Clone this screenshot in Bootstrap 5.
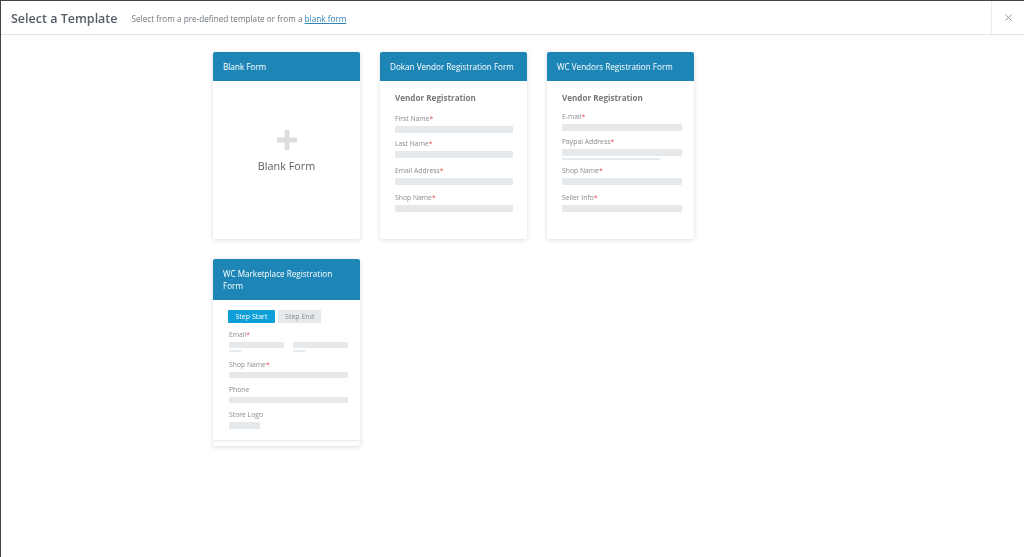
<!DOCTYPE html>
<html lang="en">
<head>
    <meta charset="UTF-8">
    <meta name="viewport" content="width=device-width, initial-scale=1.0">
    <title>Select a Template</title>
    <link href="https://cdn.jsdelivr.net/npm/bootstrap@5.3.0/dist/css/bootstrap.min.css" rel="stylesheet">
    <style>
        body {
            font-family: "Open Sans", "Liberation Sans", sans-serif;
            background: #fff;
            height: 557px;
            overflow: hidden;
            border-top: 1px solid #444;
            border-left: 1px solid #444;
        }
        /* the reference is a slightly soft, scaled-down capture */
        .top-bar, .template-list { filter: blur(.3px); }
        .top-bar {
            height: 34px;
            border-bottom: 1px solid #e2e4e7;
        }
        .top-bar h1 {
            font-size: 12.5px;
            font-weight: 600;
            color: #555d66;
            margin: 2px 14px 0 10px;
        }
        .top-bar p {
            font-size: 8.2px;
            color: #6f777d;
            margin: 4px 0 0;
        }
        .top-bar a { color: #2f86b4; }
        .close-box {
            width: 33px;
            border-left: 1px solid #e8eaec;
            color: #8d99a3;
        }
        .template-list {
            display: grid;
            grid-template-columns: repeat(3, 147px);
            grid-auto-rows: 187px;
            gap: 20px;
            padding: 17px 0 0 212px;
        }
        .template-card {
            border: 0;
            border-radius: 2px;
            box-shadow: 0 1px 5px rgba(0, 0, 0, .14);
            overflow: hidden;
        }
        .template-head {
            background: #1e86b6;
            color: #fff;
            font-size: 8.15px;
            line-height: 12px;
            padding: 9px 9px 8px 10px;
            font-weight: 400;
        }
        .blank-body {
            height: 158px;
            padding-top: 49px;
            color: #5e5e5e;
            font-size: 10.8px;
            line-height: 16px;
        }
        .blank-body svg { display: block; margin: 0 auto 8px; }
        .preview { padding: 11px 14px 0 15px; }
        .preview.wide { padding-right: 12px; }
        .preview h6 {
            font-size: 8.1px;
            line-height: 12px;
            font-weight: 700;
            color: #7a7a7a;
            margin: 0 0 9px;
        }
        .preview h6.tight { margin-bottom: 7px; }
        .lbl {
            font-size: 6.8px;
            line-height: 10px;
            padding-top: 1px;
            color: #8b8b8b;
        }
        .lbl span { color: #e4505a; }
        .bar {
            height: 7px;
            background: #e5e9eb;
            border-radius: 1px;
            margin-top: 2px;
        }
        .row-s { margin-top: 5px; }
        .row-6 { margin-top: 6px; }
        .row-m { margin-top: 7px; }
        .thin {
            height: 2px;
            width: 98px;
            background: #e5e9eb;
            margin-top: 2px;
        }
        .tiny {
            height: 2px;
            width: 12px;
            background: #e5e9eb;
            margin-top: 2px;
        }
        .market-inner {
            height: 140px;
            padding: 10px 12px 0 16px;
            box-shadow: 0 1px 2px rgba(0, 0, 0, .1);
        }
        .market-inner .bar { height: 6px; }
        .market-inner .bar.logo { height: 7px; width: 31px; }
        .steps { gap: 3px; margin-left: -1px; }
        .pair { gap: 9px; }
        .pair .bar { margin-top: 2px; }
        .step {
            font-size: 7px;
            line-height: 13px;
            height: 13px;
            border-radius: 1px;
            text-align: center;
        }
        .step-on { width: 47px; background: #0f9fd8; color: #fff; }
        .step-off { width: 43px; background: #e5e9eb; color: #8b8b8b; }
    </style>
</head>
<body>
<!-- Header -->
<div class="top-bar d-flex align-items-center">
    <h1>Select a Template</h1>
    <p>Select from a pre-defined template or from a <a href="#">blank form</a></p>
    <div class="close-box ms-auto h-100 d-flex align-items-center justify-content-center">
        <svg width="7" height="7" viewBox="0 0 7 7"><path d="M.5.5l6 6M6.5.5l-6 6" stroke="currentColor" stroke-width="1" fill="none"/></svg>
    </div>
</div>

<div class="template-list">
    <div class="card template-card">
        <div class="template-head">Blank Form</div>
        <div class="blank-body text-center">
            <svg width="20" height="20" viewBox="0 0 20 20"><path d="M7.500 0h5v7.500H20v5h-7.500V20h-5v-7.500H0v-5h7.500z" fill="#dddddf"/></svg>
            Blank Form
        </div>
    </div>

    <div class="card template-card">
        <div class="template-head">Dokan Vendor Registration Form</div>
        <div class="preview">
            <h6>Vendor Registration</h6>
            <div class="lbl">First Name<span>*</span></div>
            <div class="bar"></div>
            <div class="lbl row-s">Last Name<span>*</span></div>
            <div class="bar"></div>
            <div class="lbl row-m">Email Address<span>*</span></div>
            <div class="bar"></div>
            <div class="lbl row-m">Shop Name<span>*</span></div>
            <div class="bar"></div>
        </div>
    </div>

    <div class="card template-card">
        <div class="template-head">WC Vendors Registration Form</div>
        <div class="preview wide">
            <h6 class="tight">Vendor Registration</h6>
            <div class="lbl">E-mail<span>*</span></div>
            <div class="bar"></div>
            <div class="lbl row-s">Paypal Address<span>*</span></div>
            <div class="bar"></div>
            <div class="thin"></div>
            <div class="lbl row-s">Shop Name<span>*</span></div>
            <div class="bar"></div>
            <div class="lbl row-m">Seller Info<span>*</span></div>
            <div class="bar"></div>
        </div>
    </div>

    <div class="card template-card">
        <div class="template-head">WC Marketplace Registration Form</div>
        <div class="market-inner">
            <div class="d-flex steps">
                <div class="step step-on">Step Start</div>
                <div class="step step-off">Step End</div>
            </div>
            <div class="lbl row-6">Email<span>*</span></div>
            <div class="d-flex pair">
                <div class="flex-fill"><div class="bar"></div><div class="tiny"></div></div>
                <div class="flex-fill"><div class="bar"></div><div class="tiny"></div></div>
            </div>
            <div class="lbl row-m">Shop Name<span>*</span></div>
            <div class="bar"></div>
            <div class="lbl row-6">Phone</div>
            <div class="bar"></div>
            <div class="lbl row-6">Store Logo</div>
            <div class="bar logo"></div>
        </div>
    </div>
</div>

<script src="https://cdn.jsdelivr.net/npm/bootstrap@5.3.0/dist/js/bootstrap.bundle.min.js"></script>
</body>
</html>
